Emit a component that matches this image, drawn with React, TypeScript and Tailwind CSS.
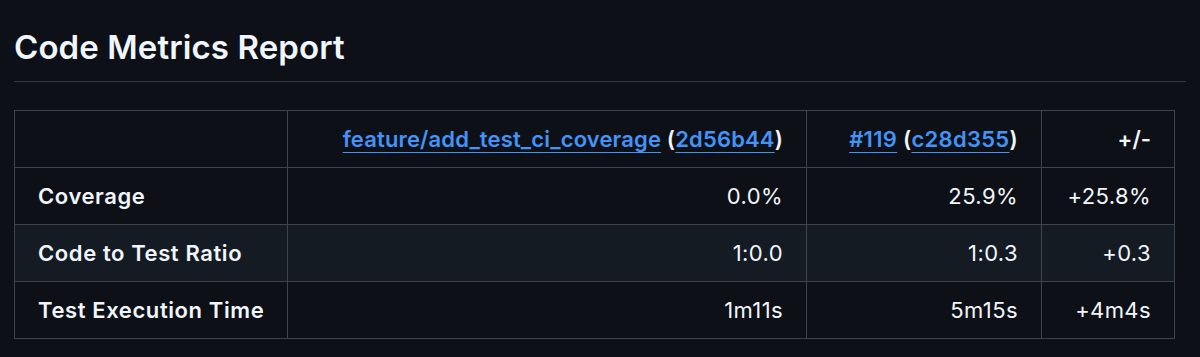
const rows = [
  { metric: 'Coverage', base: '0.0%', head: '25.9%', diff: '+25.8%' },
  { metric: 'Code to Test Ratio', base: '1:0.0', head: '1:0.3', diff: '+0.3' },
  { metric: 'Test Execution Time', base: '1m11s', head: '5m15s', diff: '+4m4s' },
];

const link = 'text-[#4493f8] underline decoration-1 underline-offset-[5px]';

const App = () => (
  <div className="min-h-screen bg-[#0d1117] px-[14px] pt-[26px] font-['Inter',sans-serif] text-[22px] text-[#f0f6fc]">
    <h2 className="border-b border-[#30363d] pb-[13px] text-[33px] font-semibold leading-[42px] tracking-[0.1px]">
      Code Metrics Report
    </h2>
    <table className="mt-[28px] w-[1160px] table-fixed border-collapse whitespace-nowrap leading-[32px]">
      <thead>
        <tr>
          <th className="w-[273px] border border-[#3d444d] px-[23px] py-3" />
          <th className="w-[519px] border border-[#3d444d] px-[23px] py-3 text-right font-semibold tracking-[0.15px]">
            <a className={link}>feature/add_test_ci_coverage</a> (<a className={link}>2d56b44</a>)
          </th>
          <th className="w-[235px] border border-[#3d444d] px-[23px] py-3 text-right font-semibold tracking-[0.3px]">
            <a className={link}>#119</a> (<a className={link}>c28d355</a>)
          </th>
          <th className="w-[133px] border border-[#3d444d] px-[23px] py-3 text-right font-semibold">+/-</th>
        </tr>
      </thead>
      <tbody>
        {rows.map((r, i) => (
          <tr key={r.metric} className={i % 2 === 1 ? 'bg-[#151b23]' : ''}>
            <td className="border border-[#3d444d] px-[23px] py-3 font-semibold tracking-[0.6px]">{r.metric}</td>
            <td className="border border-[#3d444d] px-[23px] py-3 text-right tracking-[0.4px]">{r.base}</td>
            <td className="border border-[#3d444d] px-[23px] py-3 text-right tracking-[0.4px]">{r.head}</td>
            <td className="border border-[#3d444d] px-[23px] py-3 text-right tracking-[0.4px]">{r.diff}</td>
          </tr>
        ))}
      </tbody>
    </table>
  </div>
);

export default App;
